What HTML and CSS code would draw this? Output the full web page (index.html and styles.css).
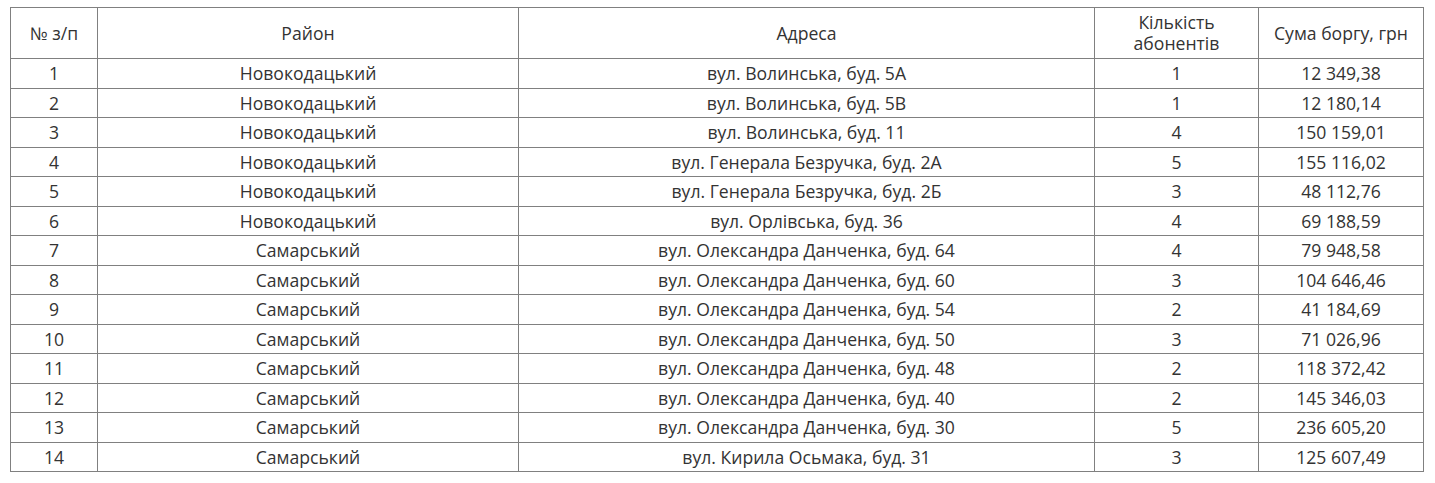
FILE: index.html
```html
<!DOCTYPE html>
<html lang="uk">
<head>
<meta charset="utf-8">
<title>Борги</title>
<link rel="stylesheet" href="styles.css">
</head>
<body>
<table class="debt-table">
  <colgroup>
    <col class="c-num">
    <col class="c-district">
    <col class="c-address">
    <col class="c-count">
    <col class="c-sum">
  </colgroup>
  <thead>
    <tr><th>№ з/п</th><th>Район</th><th>Адреса</th><th>Кількість абонентів</th><th>Сума боргу, грн</th></tr>
  </thead>
  <tbody>
    <tr><td>1</td><td>Новокодацький</td><td>вул. Волинська, буд. 5А</td><td>1</td><td>12 349,38</td></tr>
    <tr><td>2</td><td>Новокодацький</td><td>вул. Волинська, буд. 5В</td><td>1</td><td>12 180,14</td></tr>
    <tr><td>3</td><td>Новокодацький</td><td>вул. Волинська, буд. 11</td><td>4</td><td>150 159,01</td></tr>
    <tr><td>4</td><td>Новокодацький</td><td>вул. Генерала Безручка, буд. 2А</td><td>5</td><td>155 116,02</td></tr>
    <tr><td>5</td><td>Новокодацький</td><td>вул. Генерала Безручка, буд. 2Б</td><td>3</td><td>48 112,76</td></tr>
    <tr><td>6</td><td>Новокодацький</td><td>вул. Орлівська, буд. 36</td><td>4</td><td>69 188,59</td></tr>
    <tr><td>7</td><td>Самарський</td><td>вул. Олександра Данченка, буд. 64</td><td>4</td><td>79 948,58</td></tr>
    <tr><td>8</td><td>Самарський</td><td>вул. Олександра Данченка, буд. 60</td><td>3</td><td>104 646,46</td></tr>
    <tr><td>9</td><td>Самарський</td><td>вул. Олександра Данченка, буд. 54</td><td>2</td><td>41 184,69</td></tr>
    <tr><td>10</td><td>Самарський</td><td>вул. Олександра Данченка, буд. 50</td><td>3</td><td>71 026,96</td></tr>
    <tr><td>11</td><td>Самарський</td><td>вул. Олександра Данченка, буд. 48</td><td>2</td><td>118 372,42</td></tr>
    <tr><td>12</td><td>Самарський</td><td>вул. Олександра Данченка, буд. 40</td><td>2</td><td>145 346,03</td></tr>
    <tr><td>13</td><td>Самарський</td><td>вул. Олександра Данченка, буд. 30</td><td>5</td><td>236 605,20</td></tr>
    <tr><td>14</td><td>Самарський</td><td>вул. Кирила Осьмака, буд. 31</td><td>3</td><td>125 607,49</td></tr>
  </tbody>
</table>
</body>
</html>
```
FILE: styles.css
```css
html, body {
  margin: 0;
  padding: 0;
  background: #fff;
}
body {
  padding: 7px 0 0 10px;
  font-family: "Open Sans", "Liberation Sans", sans-serif;
  font-size: 17.6px;
  color: #333;
}
.debt-table {
  border-collapse: collapse;
  table-layout: fixed;
  width: 1413px;
}
.c-num { width: 87px; }
.c-district { width: 421px; }
.c-address { width: 576px; }
.c-count { width: 164px; }
.c-sum { width: 165px; }
.debt-table th,
.debt-table td {
  border: 1px solid #808080;
  text-align: center;
  vertical-align: middle;
  font-weight: normal;
}
.debt-table th {
  height: 49px;
  padding: 4px 10px;
  line-height: 21px;
  box-sizing: border-box;
}
.debt-table td {
  padding: 3px 10px;
  line-height: 22.5px;
}
```
